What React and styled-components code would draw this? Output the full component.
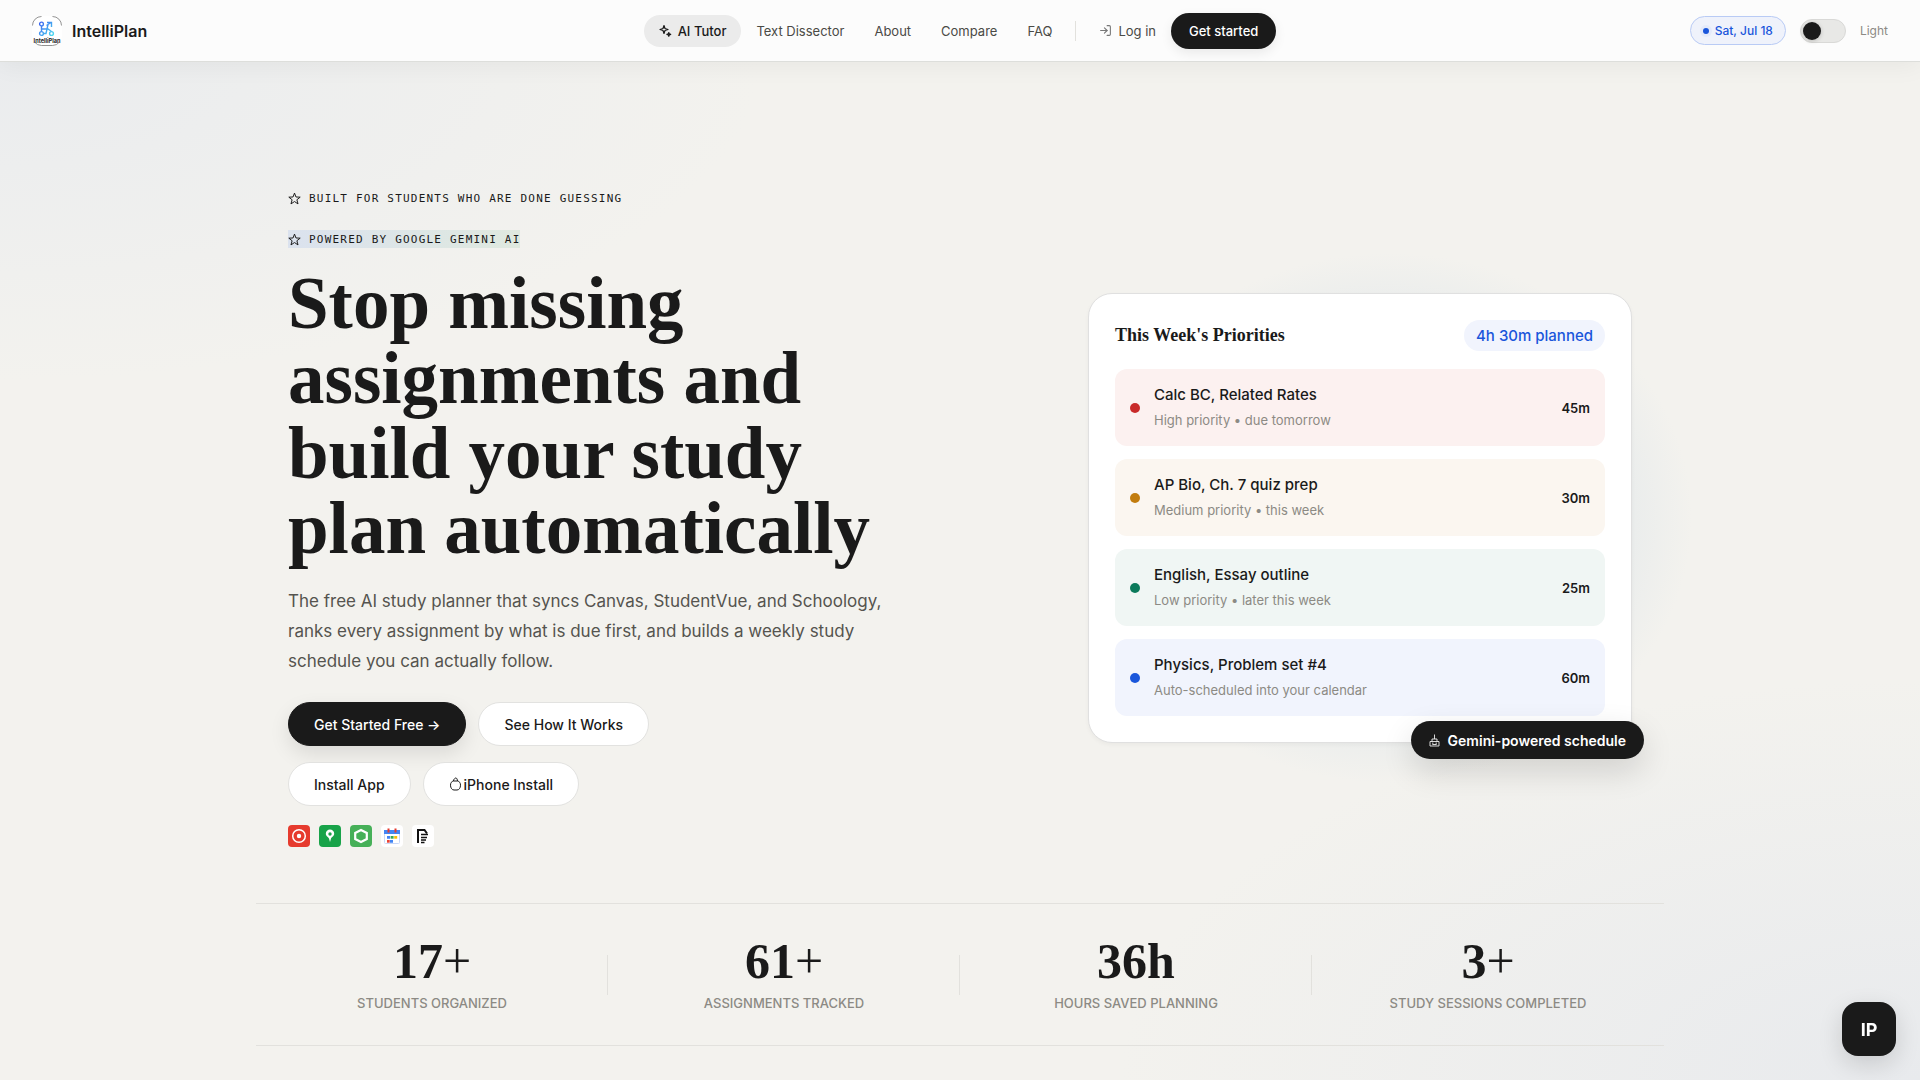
import React, { useState } from 'react';

import styled, { createGlobalStyle } from 'styled-components';
import { LogIn } from 'lucide-react';

const ink = '#1a1a1a';
const muted = '#8c8a84';
const blue = '#1a56db';
const line = '#e2e1dd';
const sans = `Inter, 'Liberation Sans', sans-serif`;
const serif = `'Liberation Serif', serif`;

const GlobalStyle = createGlobalStyle`

    * {
        box-sizing: border-box;
    }

    body {
        margin: 0;
        color: ${ink};
        font-family: ${sans};
        background: #f3f2ee;
    }

    button, input {
        font-family: inherit;
        margin: 0;
    }

    a {
        color: inherit;
        text-decoration: none;
    }

    svg {
        display: block;
        flex: none;
    }

`;

const Page = styled.div`
    min-height: 100vh;
    background:
        radial-gradient(ellipse 760px 320px at 0 60px, #eaecee 0%, rgba(234, 236, 238, 0) 100%),
        radial-gradient(ellipse 800px 400px at 100% 100%, #e8eaed 0%, rgba(232, 234, 237, 0) 100%),
        #f3f2ee;
`;

const Header = styled.header`
    display: grid;
    grid-template-columns: 1fr auto 1fr;
    align-items: center;
    height: 62px;
    padding: 0 32px;
    background: #fcfcfc;
    border-bottom: 1px solid #dddedb;
    box-shadow: 0 4px 24px rgba(0, 0, 0, 0.05);
`;

const Brand = styled.a`
    display: flex;
    align-items: center;
    gap: 10px;
    font-size: 16px;
    font-weight: 600;
`;

const Nav = styled.nav`
    display: flex;
    align-items: center;
`;

const NavLink = styled.a`
    display: flex;
    align-items: center;
    gap: 6px;
    height: 32px;
    padding: 0 15px;
    border-radius: 16px;
    font-size: 13px;
    font-weight: ${(props) => (props.$active ? 500 : 400)};
    color: ${(props) => (props.$active ? ink : '#4a4a46')};
    background: ${(props) => (props.$active ? '#ebebeb' : 'transparent')};
`;

const NavDivider = styled.span`
    width: 1px;
    height: 20px;
    margin: 0 8px;
    background: ${line};
`;

const NavButton = styled.button`
    height: 36px;
    padding: 0 18px;
    border: 0;
    border-radius: 18px;
    color: #fff;
    background: ${ink};
    font-size: 13px;
    font-weight: 500;
    box-shadow: 0 4px 12px rgba(0, 0, 0, 0.08);
`;

const HeaderTools = styled.div`
    display: flex;
    justify-content: flex-end;
    align-items: center;
    gap: 14px;
`;

const DatePill = styled.div`
    display: flex;
    align-items: center;
    gap: 6px;
    height: 29px;
    padding: 0 12px;
    border: 1px solid #b9cbf5;
    border-radius: 15px;
    color: ${blue};
    background: #eff2fb;
    font-size: 12px;
    font-weight: 500;
`;

const DateDot = styled.span`
    width: 6px;
    height: 6px;
    border-radius: 50%;
    background: ${blue};
    box-shadow: 0 0 0 3px #e4eafa;
`;

const ThemeLabel = styled.label`
    display: flex;
    align-items: center;
    gap: 14px;
    color: ${muted};
    font-size: 12px;
`;

const Switch = styled.input`
    appearance: none;
    display: flex;
    align-items: center;
    justify-content: ${(props) => (props.checked ? 'flex-end' : 'flex-start')};
    width: 46px;
    height: 24px;
    padding: 0 2px;
    border: 1px solid #d9d9d7;
    border-radius: 12px;
    background: #e8e8e6;

    &::before {
        content: '';
        width: 18px;
        height: 18px;
        border-radius: 50%;
        background: ${ink};
        box-shadow: 0 1px 4px rgba(0, 0, 0, 0.2);
    }
`;

const Container = styled.main`
    max-width: 1408px;
    margin: 0 auto;
    padding: 127px 0 32px;
`;

const Hero = styled.section`
    display: grid;
    grid-template-columns: minmax(0, 736fr) minmax(0, 544fr);
    gap: 64px;
    align-items: center;
    padding: 0 32px 56px;
`;

const Intro = styled.div`
    display: flex;
    flex-direction: column;
    align-items: flex-start;
`;

const Eyebrow = styled.div`
    display: flex;
    align-items: center;
    gap: 8px;
    height: 18px;
    margin-bottom: ${(props) => (props.$tinted ? '18px' : '23px')};
    background: ${(props) => (props.$tinted ? 'linear-gradient(90deg, #dbe2ee, #dfe9df)' : 'none')};
    font-family: 'DejaVu Sans Mono', monospace;
    font-size: 11px;
    letter-spacing: 0.11em;
    text-transform: uppercase;
`;

const Title = styled.h1`
    max-width: 640px;
    margin: 0 0 20px;
    font-family: ${serif};
    font-size: 73px;
    line-height: 75px;
    font-weight: 700;
`;

const Lead = styled.p`
    max-width: 610px;
    margin: 0 0 26px;
    color: #55544f;
    font-size: 17px;
    line-height: 30px;
`;

const ButtonRow = styled.div`
    display: flex;
    flex-wrap: wrap;
    gap: 12px;
    margin-bottom: ${(props) => props.$space};
`;

const Button = styled.button`
    display: flex;
    align-items: center;
    gap: 2px;
    height: 44px;
    padding: 0 25px;
    border: 1px solid ${(props) => (props.$primary ? ink : '#e2e2e0')};
    border-radius: 22px;
    color: ${(props) => (props.$primary ? '#fff' : ink)};
    background: ${(props) => (props.$primary ? ink : '#fff')};
    font-size: 14px;
    font-weight: 500;
    box-shadow: ${(props) => (props.$primary ? '0 8px 20px rgba(0, 0, 0, 0.1)' : 'none')};
`;

const AppList = styled.div`
    display: flex;
    gap: 9px;
`;

const CardWrap = styled.div`
    position: relative;
    isolation: isolate;

    &::before {
        content: '';
        position: absolute;
        z-index: -1;
        inset: -40px -60px -40px 0;
        background: radial-gradient(closest-side, #e3e8ea 0%, #e6eaeb 70%, rgba(238, 239, 237, 0) 100%);
    }
`;

const Card = styled.div`
    display: flex;
    flex-direction: column;
    gap: 13px;
    padding: 26px;
    border: 1px solid #e0e0e0;
    border-radius: 24px;
    background: #fff;
    box-shadow: 0 2px 4px rgba(0, 0, 0, 0.04);
`;

const CardHead = styled.div`
    display: flex;
    justify-content: space-between;
    align-items: center;
    margin-bottom: 5px;
`;

const CardTitle = styled.h2`
    margin: 0;
    font-family: ${serif};
    font-size: 18px;
    font-weight: 700;
`;

const PlannedPill = styled.span`
    padding: 0 12px;
    border-radius: 16px;
    color: ${blue};
    background: #f1f4fd;
    font-size: 15px;
    line-height: 31px;
    font-weight: 500;
`;

const Task = styled.div`
    display: flex;
    align-items: center;
    gap: 14px;
    padding: 15px;
    border-radius: 12px;
    background: ${(props) => props.$tint};
`;

const TaskDot = styled.span`
    width: 10px;
    height: 10px;
    border-radius: 50%;
    background: ${(props) => props.$color};
`;

const TaskText = styled.div`
    flex: 1;
`;

const TaskName = styled.div`
    margin-bottom: 4px;
    font-size: 15px;
    line-height: 22px;
    font-weight: 500;
`;

const TaskNote = styled.div`
    color: ${muted};
    font-size: 13px;
    line-height: 21px;
`;

const TaskTime = styled.span`
    font-size: 13px;
    font-weight: 600;
`;

const Badge = styled.div`
    position: absolute;
    right: -12px;
    bottom: -16px;
    display: flex;
    align-items: center;
    gap: 8px;
    height: 38px;
    padding: 0 18px;
    border-radius: 19px;
    color: #fff;
    background: ${ink};
    font-size: 14px;
    font-weight: 600;
    box-shadow: 0 12px 32px rgba(0, 0, 0, 0.14);
`;

const Stats = styled.section`
    display: grid;
    grid-template-columns: repeat(4, 1fr);
    border-top: 1px solid ${line};
    border-bottom: 1px solid ${line};
`;

const Stat = styled.div`
    position: relative;
    padding: 32px 16px;
    text-align: center;

    &:not(:last-child)::after {
        content: '';
        position: absolute;
        right: 0;
        top: 51px;
        width: 1px;
        height: 40px;
        background: ${line};
    }
`;

const StatValue = styled.div`
    margin-bottom: 7px;
    font-family: ${serif};
    font-size: 50px;
    line-height: 50px;
    font-weight: 700;
`;

const StatUnit = styled.span`
    font-weight: ${(props) => (props.$light ? 400 : 700)};
`;

const StatLabel = styled.div`
    color: ${muted};
    font-size: 13px;
    line-height: 20px;
    font-weight: 500;
    text-transform: uppercase;
`;

const ChatButton = styled.button`
    position: fixed;
    right: 24px;
    bottom: 24px;
    width: 54px;
    height: 54px;
    padding: 0;
    border: 0;
    border-radius: 16px;
    color: #fff;
    background: ${ink};
    font-size: 18px;
    font-weight: 700;
    box-shadow: 0 8px 24px rgba(0, 0, 0, 0.14);
`;

const Logo = () => (
    <svg width="30" height="30" viewBox="0 0 30 30">
        <defs>
            <linearGradient id="mark" gradientUnits="userSpaceOnUse" x1="7" y1="6" x2="22" y2="20">
                <stop offset="0" stopColor="#3b5ef0" />
                <stop offset="1" stopColor="#4fe3f0" />
            </linearGradient>
        </defs>
        <rect width="30" height="30" rx="10" fill="#fff" />
        <path d="M.5 9.500A9 9 0 0 1 9.500 .5M20.500 .5A9 9 0 0 1 29.500 9.500M27.500 26A9 9 0 0 1 20.500 29.500H9.500A9 9 0 0 1 2.500 26" fill="none" stroke="#777" strokeWidth=".8" />
        <g fill="none" stroke="url(#mark)" strokeWidth="1.400">
            <circle cx="9.500" cy="8" r="1.900" />
            <circle cx="9.500" cy="17.500" r="1.900" />
            <circle cx="19.500" cy="17.500" r="1.900" />
            <path d="M9.500 10v5.500M9.500 13h6.500l3.500 2.500M11.500 17.500h2.500l2-9M14.500 9.500 19 6.500M15 6.500h4.500V11" />
        </g>
        <text x="15" y="26.500" textAnchor="middle" fontSize="5.600" fontWeight="700" fontFamily="Inter, sans-serif" fill="#222">IntelliPlan</text>
    </svg>
);

const SparkIcon = () => (
    <svg width="13" height="13" viewBox="0 0 13 13" fill="none" stroke="currentColor" strokeWidth="1.200" strokeLinejoin="round">
        <path d="M5 1.500 6 4.500 9 5.500 6 6.500 5 9.500 4 6.500 1 5.500 4 4.500Z" />
        <path d="M9.800 8.500 10.300 9.900 11.700 10.400 10.300 10.900 9.800 12.300 9.300 10.900 7.900 10.400 9.300 9.900Z" />
    </svg>
);

const StarIcon = () => (
    <svg width="13" height="13" viewBox="0 0 24 24" fill="none" stroke="currentColor" strokeWidth="1.800">
        <path d="M12 2 14.700 9.200 22.500 9.500 16.400 14.300 18.500 22 12 17.600 5.500 22 7.600 14.300 1.500 9.500 9.300 9.200Z" />
    </svg>
);

const PhoneIcon = () => (
    <svg width="13" height="14" viewBox="0 0 13 14" fill="none" stroke="currentColor">
        <path d="M4.500 4C2.500 4.300 1.500 6 1.500 8.200c0 2.800 1.500 4.800 3.500 4.800h3c2 0 3.500-2 3.500-4.800 0-2.200-1-3.900-3-4.200Z" />
        <path d="M4.500 4C4.500 2.500 5.500 1.500 6.500 1S8.500 2.500 8.500 4" />
    </svg>
);

const RobotIcon = () => (
    <svg width="11" height="13" viewBox="0 0 11 13" fill="none" stroke="#eee">
        <path d="M5.500 .5v4.500M3 7.500V5h5v2.500M1 12V7.500h9V12ZM3.800 8.500v2M7.200 8.500v2M3.500 10.500h4" strokeWidth=".9" />
    </svg>
);

const CanvasIcon = () => (
    <svg width="22" height="22" viewBox="0 0 22 22">
        <rect width="22" height="22" rx="4" fill="#e63b2e" />
        <circle cx="11" cy="11" r="6.300" fill="none" stroke="#fff" strokeWidth="1.500" />
        <circle cx="11" cy="11" r="2.200" fill="#fff" />
    </svg>
);

const StudentVueIcon = () => (
    <svg width="22" height="22" viewBox="0 0 22 22">
        <rect width="22" height="22" rx="4" fill="#18a349" />
        <path d="M11 4.500a4.200 4.200 0 0 0-4.200 4.200c0 2.500 2.700 3.500 3.200 4.800L11 17l1-3.500c.5-1.300 3.200-2.300 3.200-4.800A4.200 4.200 0 0 0 11 4.500Z" fill="#fff" />
        <circle cx="11" cy="9" r="1.700" fill="#18a349" />
    </svg>
);

const SchoologyIcon = () => (
    <svg width="22" height="22" viewBox="0 0 22 22">
        <rect width="22" height="22" rx="4" fill="#46b058" />
        <path d="M11 5 16.800 8v6L11 17 5.200 14V8Z" fill="none" stroke="#fff" strokeWidth="2.200" />
    </svg>
);

const CalendarIcon = () => (
    <svg width="22" height="22" viewBox="0 0 22 22">
        <rect width="22" height="22" rx="4" fill="#fff" />
        <rect x="3.500" y="5.500" width="15" height="13" rx="1" fill="#fff" stroke="#c8d8f8" />
        <path d="M3 5h16v4H3Z" fill="#4285f4" />
        <path d="M6.500 3.500h2v4h-2ZM13.500 3.500h2v4h-2Z" fill="#e63b2e" />
        <path d="M6 11h3v2.700H6ZM9 15h3v2.700H9Z" fill="#4285f4" />
        <path d="M9.600 11h3v2.700h-3Z" fill="#34a853" />
        <path d="M13.200 11h3v2.700h-3Z" fill="#fbbc05" />
        <path d="M6 15h2.700v2.700H6Z" fill="#ea4335" />
    </svg>
);

const NotesIcon = () => (
    <svg width="22" height="22" viewBox="0 0 22 22" fill="none" stroke="#111">
        <rect width="22" height="22" rx="4" fill="#fff" stroke="none" />
        <path d="M6 18V5h6.500l2.500 3.500" strokeWidth="2" />
        <path d="M9 9.500h7M9 12.500h6M9 15h5M9 17.500h3.500" strokeWidth="1.500" />
    </svg>
);

const tasks = [
    { name: 'Calc BC, Related Rates', note: 'High priority • due tomorrow', time: '45m', color: '#c92a2a', tint: '#fcf1f0' },
    { name: 'AP Bio, Ch. 7 quiz prep', note: 'Medium priority • this week', time: '30m', color: '#c27c0e', tint: '#fbf6f0' },
    { name: 'English, Essay outline', note: 'Low priority • later this week', time: '25m', color: '#0b7a5b', tint: '#f0f6f4' },
    { name: 'Physics, Problem set #4', note: 'Auto-scheduled into your calendar', time: '60m', color: blue, tint: '#f1f4fd' },
];

const stats = [
    { value: '17', unit: '+', label: 'Students organized' },
    { value: '61', unit: '+', label: 'Assignments tracked' },
    { value: '36', unit: 'h', label: 'Hours saved planning' },
    { value: '3', unit: '+', label: 'Study sessions completed' },
];

const App = () => {

    const [dark, setDark] = useState(false);

    return (

        <Page>
            <GlobalStyle />
            <Header>
                <Brand href="#"><Logo />IntelliPlan</Brand>
                <Nav>
                    <NavLink href="#tutor" $active><SparkIcon />AI Tutor</NavLink>
                    <NavLink href="#dissector">Text Dissector</NavLink>
                    <NavLink href="#about">About</NavLink>
                    <NavLink href="#compare">Compare</NavLink>
                    <NavLink href="#faq">FAQ</NavLink>
                    <NavDivider />
                    <NavLink href="#login"><LogIn size={13} strokeWidth={2} color="#777" />Log in</NavLink>
                    <NavButton>Get started</NavButton>
                </Nav>
                <HeaderTools>
                    <DatePill><DateDot />Sat, Jul 18</DatePill>
                    <ThemeLabel>
                        <Switch type="checkbox" role="switch" checked={dark} onChange={(e) => setDark(e.target.checked)} />
                        Light
                    </ThemeLabel>
                </HeaderTools>
            </Header>
            <Container>
                <Hero>
                    <Intro>
                        <Eyebrow><StarIcon />Built for students who are done guessing</Eyebrow>
                        <Eyebrow $tinted><StarIcon />Powered by Google Gemini AI</Eyebrow>
                        <Title>Stop missing assignments and build your study plan automatically</Title>
                        <Lead>The free AI study planner that syncs Canvas, StudentVue, and Schoology, ranks every assignment by what is due first, and builds a weekly study schedule you can actually follow.</Lead>
                        <ButtonRow $space="16px">
                            <Button $primary>Get Started Free →</Button>
                            <Button>See How It Works</Button>
                        </ButtonRow>
                        <ButtonRow $space="19px">
                            <Button>Install App</Button>
                            <Button><PhoneIcon />iPhone Install</Button>
                        </ButtonRow>
                        <AppList>
                            <CanvasIcon />
                            <StudentVueIcon />
                            <SchoologyIcon />
                            <CalendarIcon />
                            <NotesIcon />
                        </AppList>
                    </Intro>
                    <CardWrap>
                        <Card>
                            <CardHead>
                                <CardTitle>This Week's Priorities</CardTitle>
                                <PlannedPill>4h 30m planned</PlannedPill>
                            </CardHead>
                            {tasks.map((task) => (
                                <Task key={task.name} $tint={task.tint}>
                                    <TaskDot $color={task.color} />
                                    <TaskText>
                                        <TaskName>{task.name}</TaskName>
                                        <TaskNote>{task.note}</TaskNote>
                                    </TaskText>
                                    <TaskTime>{task.time}</TaskTime>
                                </Task>
                            ))}
                        </Card>
                        <Badge><RobotIcon />Gemini-powered schedule</Badge>
                    </CardWrap>
                </Hero>
                <Stats>
                    {stats.map((stat) => (
                        <Stat key={stat.label}>
                            <StatValue>{stat.value}<StatUnit $light={stat.unit === '+'}>{stat.unit}</StatUnit></StatValue>
                            <StatLabel>{stat.label}</StatLabel>
                        </Stat>
                    ))}
                </Stats>
            </Container>
            <ChatButton>IP</ChatButton>
        </Page>

    );

}

export default App;
